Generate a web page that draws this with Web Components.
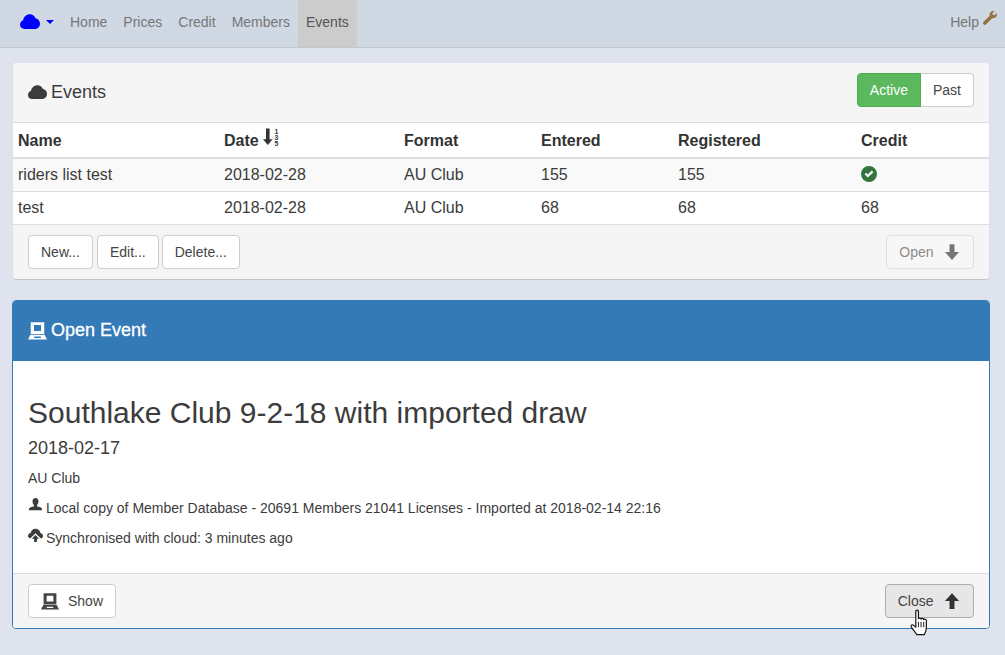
<!doctype html>
<html>
<head>
<meta charset="utf-8">
<title>Events</title>
<style>
  html, body { margin: 0; height: 100%; }
  body {
    background: #dfe3ed;
    color: #3c3c3c;
    font: 14px/20px "Liberation Sans", Arial, sans-serif;
    overflow: hidden;
  }
  .hand { position: absolute; left: 910px; top: 609px; z-index: 5; }
</style>
</head>
<body>
<template id="panel-template">
  <style>
    :host {
      display: block;
      margin: var(--panelMargin, 0 16px 21px 13px);
      background: #fff;
      border: var(--panelBorder, 0);
      border-radius: 4px;
      box-shadow: var(--panelShadow, 0 1px 1px rgba(0, 0, 0, 0.15));
      overflow: hidden;
    }
    .heading {
      display: flex;
      justify-content: space-between;
      align-items: flex-start;
      box-sizing: border-box;
      height: var(--headingHeight, 60px);
      padding: 10px 15px;
      background: var(--headingBackground, #f5f5f5);
      color: var(--headingColor, #3c3c3c);
      border-bottom: var(--headingBorder, 1px solid #ddd);
    }
    .title {
      font-size: 18px;
      line-height: 20px;
      margin-top: var(--titleTop, 9px);
      display: flex;
      align-items: center;
      gap: 4px;
    }
    .footer {
      display: flex;
      justify-content: space-between;
      align-items: flex-start;
      box-sizing: border-box;
      height: 55px;
      padding: 10px 15px;
      background: #f5f5f5;
      border-top: 1px solid #ddd;
    }
    .group { display: flex; gap: 4px; }
  </style>
  <div class="heading">
    <div class="title"><slot name="icon"></slot><slot name="title"></slot></div>
    <slot name="actions"></slot>
  </div>
  <slot></slot>
  <div class="footer">
    <div class="group"><slot name="left"></slot></div>
    <div class="group"><slot name="right"></slot></div>
  </div>
</template>

<nav-bar></nav-bar>

<app-panel>
  <app-icon slot="icon" name="cloud" size="19"></app-icon>
  <span slot="title">Events</span>
  <div slot="actions" style="display:flex">
    <app-button success>Active</app-button>
    <app-button joined>Past</app-button>
  </div>
  <events-table rows='[["riders list test","2018-02-28","AU Club","155","155","ok"],["test","2018-02-28","AU Club","68","68","68"]]'></events-table>
  <app-button slot="left">New...</app-button>
  <app-button slot="left" style="margin-right:-1px">Edit...</app-button>
  <app-button slot="left">Delete...</app-button>
  <app-button slot="right" disabled style="--buttonGap:9.5px">Open <app-icon name="down" size="18" color="#777"></app-icon></app-button>
</app-panel>

<app-panel style="--panelMargin:0 15px 0 12px;--panelBorder:1px solid #337ab7;--panelShadow:none;--headingBackground:#337ab7;--headingColor:#fff;--headingBorder:0">
  <app-icon slot="icon" name="screen" size="19"></app-icon>
  <span slot="title" style="-webkit-text-stroke:.3px #fff">Open Event</span>
  <open-event>
    <span slot="name">Southlake Club 9-2-18 with imported draw</span>
    <span slot="date">2018-02-17</span>
    <span slot="format">AU Club</span>
    <span slot="members">Local copy of Member Database - 20691 Members 21041 Licenses - Imported at 2018-02-14 22:16</span>
    <span slot="sync">Synchronised with cloud: 3 minutes ago</span>
  </open-event>
  <app-button slot="left" style="--buttonGap:9px"><app-icon name="screen" size="18"></app-icon> Show</app-button>
  <app-button slot="right" pressed style="--buttonGap:9.5px">Close <app-icon name="up" size="18" color="#333"></app-icon></app-button>
</app-panel>

<svg class="hand" width="19" height="28" viewBox="0 0 18 26">
  <path d="M5.500 2c0-1.500 2.500-1.500 2.500 0v7c.5-1 2.300-1 2.500.300.500-1 2.300-.8 2.500.500.600-.8 2.500-.6 2.500 1V17c0 3-1 5.500-2 7H6.500c-1-1.500-2-3-4.500-6-1.200-1.500-1.200-2.500-.5-3 .8-.5 2.500.3 4 2z" fill="#fff" stroke="#111" stroke-width="1.100" stroke-linejoin="round"/>
  <path d="M8 12v5M10.500 12v5M13 12v5" stroke="#111" stroke-width=".9"/>
</svg>

<script>
const digit = (y, n) => `<text x="10.800" y="${y}" font-size="6.500" font-weight="700" font-family="Liberation Sans, sans-serif">${n}</text>`

const icons = {
  cloud: '<path d="M3.600 13.500C1.500 13.500 0 12 0 10c0-1.600 1-3 2.500-3.500C3 3.800 5.200 1.800 7.800 1.800c2.200 0 4 1.300 4.800 3.300C14.700 5.400 16 7.200 16 9.300c0 2.400-1.800 4.200-4.200 4.200z"/>',
  sort: `<path d="M2.800 .5h3.400v10h2.800L4.500 16 0 10.500h2.800z"/>${digit(5.500, 1)}${digit(11, 3)}${digit(16.500, 5)}`,
  ok: '<path fill-rule="evenodd" d="M8 0a8 8 0 1 1 0 16A8 8 0 0 1 8 0zM3.600 8.300l3.200 3.300 5.600-5.400-1.600-1.600-4 3.900-1.600-1.700z"/>',
  down: '<path d="M5.800 1h4.400v7h4.100L8 15 1.700 8h4.100z"/>',
  up: '<path d="M5.800 15h4.400V8h4.100L8 1 1.700 8h4.100z"/>',
  screen: '<path fill-rule="evenodd" d="M2.300 1h11.400v10H2.300zM5 3.300v5.200h6V3.300z"/><path fill-rule="evenodd" d="M2 11.500h12l2 4H0zM5.500 13l-.6 1.300h6.200L10.500 13z"/>',
  user: '<path d="M8 1c2 0 3.200 1.500 3.200 3.800 0 1.700-.7 3-1.600 3.800v1.300c2.200.6 5.400 1.400 5.400 3.100v1H1v-1c0-1.700 3.200-2.500 5.400-3.100V8.600C5.500 7.800 4.800 6.500 4.800 4.800 4.800 2.500 6 1 8 1z"/>',
  upload: '<path d="M8 .8c2.700 0 4.900 1.900 5.300 4.400C14.900 5.500 16 6.800 16 8.400c0 1.500-1 2.500-2.500 2.600L8 5.700 2.600 11C1 10.900 0 9.700 0 8.200c0-1.600 1.200-2.900 2.800-3C3.300 2.700 5.400.8 8 .8z"/><path d="M8 7.400l4 4H9.500V15h-3v-3.600H4z"/>',
  wrench: '<path d="M15.700 2.300l-2.600 2.500-1.900-.4-.5-1.900L13.300 0c-1.700-.4-3.600.1-4.700 1.300-1.100 1.200-1.300 2.700-.9 4L.7 12.300c-.9.900-.9 2 0 2.900.9.900 2 .9 2.900 0l6.900-7c1.500.4 3.100.1 4.200-1 1.200-1.200 1.500-3.300 1-4.900z"/>'
}

class AppIcon extends HTMLElement {
  constructor() {
    super()
    const size = this.getAttribute('size') || '16'
    const color = this.getAttribute('color') || 'currentColor'
    this.attachShadow({ mode: 'open' }).innerHTML = `
      <style>
        :host { display: inline-flex; line-height: 0; color: ${color}; }
        svg { fill: currentColor; overflow: visible; }
      </style>
      <svg width="${size}" height="${size}" viewBox="0 0 16 16">${icons[this.getAttribute('name')]}</svg>`
  }
}

class NavBar extends HTMLElement {
  constructor() {
    super()
    this.attachShadow({ mode: 'open' }).innerHTML = `
      <style>
        :host {
          display: flex;
          justify-content: space-between;
          box-sizing: border-box;
          height: 48px;
          margin-bottom: 15px;
          padding: 0 8px 0 20px;
          background: #d0d8e4;
          border-bottom: 1px solid #c3c7cf;
          color: #777;
        }
        .links { display: flex; align-items: stretch; }
        .brand { display: flex; align-items: center; width: 42px; color: #00f; padding-bottom: 3px; box-sizing: border-box; }
        .caret {
          margin-left: 6px;
          border-top: 4px solid #00f;
          border-left: 4px solid transparent;
          border-right: 4px solid transparent;
        }
        a { display: flex; align-items: center; padding: 0 8px 3px; }
        a.active { background: #ccc; color: #555; }
        .help { display: flex; align-items: center; gap: 4px; padding-bottom: 3px; }
        .help app-icon { margin-top: -8px; }
      </style>
      <div class="links">
        <div class="brand"><app-icon name="cloud" size="20"></app-icon><span class="caret"></span></div>
        <a>Home</a><a>Prices</a><a>Credit</a><a>Members</a><a class="active">Events</a>
      </div>
      <div class="help">Help<app-icon name="wrench" size="14" color="#937441"></app-icon></div>`
  }
}

class AppPanel extends HTMLElement {
  constructor() {
    super()
    this.attachShadow({ mode: 'open' }).appendChild(
      document.getElementById('panel-template').content.cloneNode(true),
    )
  }
}

class AppButton extends HTMLElement {
  constructor() {
    super()
    this.attachShadow({ mode: 'open' }).innerHTML = `
      <style>
        :host {
          display: inline-flex;
          align-items: center;
          gap: var(--buttonGap, 13px);
          box-sizing: border-box;
          height: 34px;
          padding: 0 12px;
          background: #fff;
          border: 1px solid #ccc;
          border-radius: 4px;
          color: #444;
        }
        :host([success]) { background: #5cb85c; border-color: #4cae4c; color: #fff; border-radius: 4px 0 0 4px; }
        :host([joined]) { border-radius: 0 4px 4px 0; border-left: 0; }
        :host([disabled]) { background: #f7f7f7; border-color: #ddd; color: #8c8c8c; }
        :host([pressed]) { background: #e6e6e6; border-color: #adadad; }
      </style>
      <slot></slot>`
  }
}

class EventsTable extends HTMLElement {
  constructor() {
    super()
    const rows = JSON.parse(this.getAttribute('rows'))
    const cell = value => value === 'ok'
      ? '<td><app-icon name="ok" size="16" color="#34753f"></app-icon></td>'
      : `<td>${value}</td>`
    this.attachShadow({ mode: 'open' }).innerHTML = `
      <style>
        :host { display: block; }
        table { width: 100%; border-collapse: collapse; table-layout: fixed; }
        th, td { padding: 0 5px; text-align: left; font-size: 16px; vertical-align: middle; }
        th { height: 35px; padding-top: 2px; font-weight: 700; color: #333; border-bottom: 2px solid #ddd; box-sizing: border-box; }
        td { height: 33px; border-bottom: 1px solid #ddd; box-sizing: border-box; }
        tr:last-child td { border-bottom: 0; }
        tbody tr:nth-child(odd) { background: #f9f9f9; }
        th app-icon { vertical-align: 1px; margin: -6px 0; }
        td app-icon { vertical-align: -2px; margin-top: -6px; }
      </style>
      <table>
        <colgroup>
          <col style="width:206px"><col style="width:180px"><col style="width:137px">
          <col style="width:137px"><col style="width:183px"><col>
        </colgroup>
        <thead><tr>
          <th>Name</th>
          <th>Date <app-icon name="sort" size="17"></app-icon></th>
          <th>Format</th><th>Entered</th><th>Registered</th><th>Credit</th>
        </tr></thead>
        <tbody>${rows.map(r => `<tr>${r.map(cell).join('')}</tr>`).join('')}</tbody>
      </table>`
  }
}

class OpenEvent extends HTMLElement {
  constructor() {
    super()
    this.attachShadow({ mode: 'open' }).innerHTML = `
      <style>
        :host { display: block; box-sizing: border-box; height: 212px; padding: 33px 15px 0; }
        h1 { margin: 0; font-size: 30px; font-weight: 400; line-height: 38px; }
        h2 { margin: 5px 0 0; font-size: 18px; font-weight: 400; line-height: 22px; }
        p { margin: 0; display: flex; align-items: flex-start; gap: 3px; height: 30px; line-height: 20px; }
        .format { margin-top: 9px; }
        app-icon { margin-top: -1px; }
        .sync app-icon { margin-top: 0; }
      </style>
      <h1><slot name="name"></slot></h1>
      <h2><slot name="date"></slot></h2>
      <p class="format"><slot name="format"></slot></p>
      <p><app-icon name="user" size="15"></app-icon><slot name="members"></slot></p>
      <p class="sync"><app-icon name="upload" size="15"></app-icon><slot name="sync"></slot></p>`
  }
}

customElements.define('app-icon', AppIcon)
customElements.define('nav-bar', NavBar)
customElements.define('app-panel', AppPanel)
customElements.define('app-button', AppButton)
customElements.define('events-table', EventsTable)
customElements.define('open-event', OpenEvent)
</script>
</body>
</html>
